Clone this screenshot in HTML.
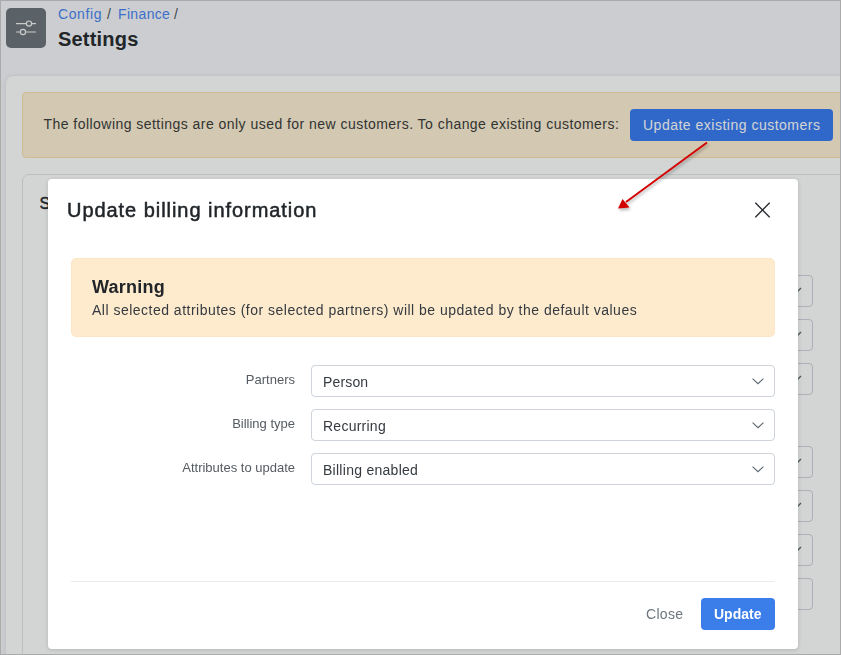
<!DOCTYPE html>
<html><head><meta charset="utf-8">
<style>
*{box-sizing:border-box;margin:0;padding:0}
html,body{width:841px;height:655px;overflow:hidden;background:#f5f7fa;font-family:"Liberation Sans",sans-serif}
.abs{position:absolute}
.t{position:absolute;white-space:nowrap;line-height:1}
#frame{position:absolute;left:0;top:0;width:841px;height:655px;border:1px solid #aaa;z-index:50;pointer-events:none}
#icon{left:6px;top:8px;width:40px;height:40px;background:#6a7177;border-radius:5px}
#panel{left:6px;top:76px;width:900px;height:700px;background:#fff;border-top-left-radius:7px;box-shadow:0 0 4px rgba(0,0,0,.1)}
#banner{left:22px;top:92px;width:900px;height:66px;background:#fff1d4;border:1px solid #fae0ac;border-radius:4px}
#bbtn{left:630px;top:109px;width:203px;height:32px;background:#3478f2;border-radius:4px}
#card{left:22px;top:174px;width:900px;height:700px;border:1px solid #e3e6e9;border-radius:7px;background:#fff}
.bsel{position:absolute;left:500px;width:313px;height:32px;border:1px solid #ced4da;border-radius:4px;background:#fff}
#overlay{left:0;top:0;width:841px;height:655px;background:rgba(33,40,38,.2)}
#modal{will-change:transform;left:48px;top:179px;width:750px;height:470px;background:#fff;border-radius:4px;box-shadow:0 1px 4px rgba(0,0,0,.15)}
#warn{left:23px;top:79px;width:704px;height:79px;background:#feebcd;border:1px solid #fce6c6;border-radius:5px}
.sel{position:absolute;left:263px;width:464px;height:32px;border:1px solid #ced4da;border-radius:4px;background:#fff}
.chev{position:absolute;right:9.6px;top:11.8px}
#divider{left:23px;top:402px;width:704px;height:1px;background:#e9ecef}
#ubtn{left:653px;top:419px;width:74px;height:32px;background:#3b7de9;border-radius:4px}
</style></head><body>
<div id="icon" class="abs">
<svg width="40" height="40" viewBox="0 0 40 40" style="position:absolute;left:0;top:0">
<g stroke="#f4f5f6" stroke-width="1.2" fill="none" stroke-linecap="round">
<line x1="10.5" y1="15.6" x2="20" y2="15.6"/><line x1="26" y1="15.6" x2="29.5" y2="15.6"/>
<circle cx="23" cy="15.6" r="2.6"/>
<line x1="10.5" y1="24" x2="14" y2="24"/><line x1="20" y1="24" x2="29.5" y2="24"/>
<circle cx="17" cy="24" r="2.6"/>
</g></svg>
</div>
<div class="t" style="left:58px;top:7px;font-size:14px;color:#4580f2;letter-spacing:0.6px">Config</div>
<div class="t" style="left:107px;top:7px;font-size:14px;color:#4a4f55">/</div>
<div class="t" style="left:118px;top:7px;font-size:14px;color:#4580f2;letter-spacing:0.35px">Finance</div>
<div class="t" style="left:174px;top:7px;font-size:14px;color:#4a4f55">/</div>
<div class="t" style="left:58px;top:28.5px;font-size:20px;font-weight:bold;color:#212529;letter-spacing:0.2px">Settings</div>

<div id="panel" class="abs"></div>
<div id="banner" class="abs"></div>
<div class="t" style="left:43.5px;top:117px;font-size:14px;color:#363636;letter-spacing:0.46px">The following settings are only used for new customers. To change existing customers:</div>
<div id="bbtn" class="abs"></div>
<div class="t" style="left:643px;top:118px;font-size:14px;color:#fff;letter-spacing:0.5px">Update existing customers</div>
<div id="card" class="abs"></div>
<div class="t" style="left:39.5px;top:196px;font-size:16px;color:#212529;-webkit-text-stroke:0.45px #212529">Settings</div>
<div class="bsel" style="top:275px"></div>
<div class="bsel" style="top:319px"></div>
<div class="bsel" style="top:363px"></div>
<div class="bsel" style="top:446px"></div>
<div class="bsel" style="top:490px"></div>
<div class="bsel" style="top:534px"></div>
<div class="bsel" style="top:578px"></div>
<svg class="abs" style="left:0;top:0" width="841" height="655">
<g stroke="#5b6670" stroke-width="1.4" fill="none">
<polyline points="790,288 795.5,293.5 801,288"/>
<polyline points="790,332 795.5,337.5 801,332"/>
<polyline points="790,376 795.5,381.5 801,376"/>
<polyline points="790,459 795.5,464.5 801,459"/>
<polyline points="790,503 795.5,508.5 801,503"/>
<polyline points="790,547 795.5,552.5 801,547"/>
</g></svg>

<div id="overlay" class="abs"></div>

<div id="modal" class="abs">
  <div class="t" style="left:19px;top:21px;font-size:20px;color:#212529;letter-spacing:0.95px;-webkit-text-stroke:0.5px #212529">Update billing information</div>
  <svg class="abs" style="left:706px;top:23px" width="16" height="16" viewBox="0 0 16 16">
   <g stroke="#2a2e33" stroke-width="1.35" stroke-linecap="round"><line x1="1.6" y1="1.1" x2="15.4" y2="14.9"/><line x1="15.4" y1="1.1" x2="1.6" y2="14.9"/></g></svg>
  <div id="warn" class="abs"></div>
  <div class="t" style="left:44px;top:99px;font-size:18px;font-weight:bold;color:#212529;letter-spacing:0.25px">Warning</div>
  <div class="t" style="left:44px;top:124px;font-size:14px;color:#343a40;letter-spacing:0.49px">All selected attributes (for selected partners) will be updated by the default values</div>

  <div class="t" style="left:0;width:247px;text-align:right;top:194px;font-size:13px;color:#555b61">Partners</div>
  <div class="t" style="left:0;width:247px;text-align:right;top:238px;font-size:13px;color:#555b61">Billing type</div>
  <div class="t" style="left:0;width:247px;text-align:right;top:282px;font-size:13px;color:#555b61">Attributes to update</div>

  <div class="sel" style="top:186px"><div class="t" style="left:11px;top:9px;font-size:14px;color:#343a40;letter-spacing:0.15px">Person</div>
   <svg class="chev" width="12" height="7" viewBox="0 0 12 7"><polyline points="0.6,0.6 6,5.6 11.4,0.6" stroke="#5d6872" stroke-width="1.15" fill="none"/></svg></div>
  <div class="sel" style="top:230px"><div class="t" style="left:11px;top:9px;font-size:14px;color:#343a40;letter-spacing:0.25px">Recurring</div>
   <svg class="chev" width="12" height="7" viewBox="0 0 12 7"><polyline points="0.6,0.6 6,5.6 11.4,0.6" stroke="#5d6872" stroke-width="1.15" fill="none"/></svg></div>
  <div class="sel" style="top:274px"><div class="t" style="left:11px;top:9px;font-size:14px;color:#343a40;letter-spacing:0.27px">Billing enabled</div>
   <svg class="chev" width="12" height="7" viewBox="0 0 12 7"><polyline points="0.6,0.6 6,5.6 11.4,0.6" stroke="#5d6872" stroke-width="1.15" fill="none"/></svg></div>

  <div id="divider" class="abs"></div>
  <div class="t" style="left:598px;top:428px;font-size:14px;color:#6c757d;letter-spacing:0.3px">Close</div>
  <div id="ubtn" class="abs"></div>
  <div class="t" style="left:666px;top:428px;font-size:14px;font-weight:bold;color:#fff">Update</div>
</div>

<svg class="abs" style="left:0;top:0;z-index:40;filter:drop-shadow(1px 2px 1.5px rgba(0,0,0,.3))" width="841" height="655">
<line x1="707" y1="142.5" x2="626" y2="202" stroke="#d40000" stroke-width="1.9"/>
<polygon points="618,208.5 622.5,199 629.5,207.5" fill="#d40000"/>
</svg>
<div id="frame"></div>
</body></html>
